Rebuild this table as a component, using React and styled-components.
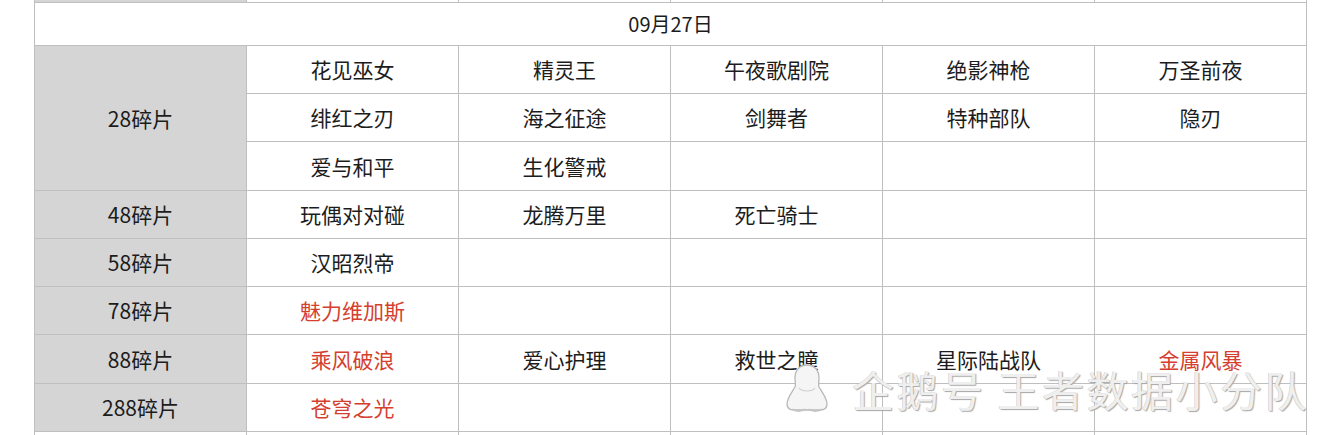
import React from "react";
import styled, { createGlobalStyle } from "styled-components";

const GlobalStyle = createGlobalStyle`
  html, body {
    margin: 0;
    padding: 0;
    background: #fff;
  }
  body {
    font-family: "Noto Sans CJK SC", "Noto Sans", sans-serif;
    color: #1c1c1c;
  }
`;

const Page = styled.div`
  position: relative;
  width: 1334px;
  height: 435px;
  overflow: hidden;
  padding-left: 34px;
  box-sizing: border-box;
`;

const Sheet = styled.div`
  display: grid;
  grid-template-columns: repeat(6, 211px);
  grid-template-rows: 2px 42px 47px 47px 48px 47px 47px 47px 48px 47px 3px;
  gap: 1px;
  padding: 0 1px;
  width: max-content;
  background: #bfbfbf;
`;

const Cell = styled.div`
  display: flex;
  align-items: center;
  justify-content: center;
  background: ${(p) => (p.$label ? "#d5d5d5" : "#fff")};
  color: ${(p) => (p.$hot ? "#d43f2f" : "#1c1c1c")};
  font-size: 21px;
  line-height: 1;
  white-space: nowrap;
  overflow: hidden;
  grid-column: ${(p) => (p.$span ? `span ${p.$span}` : "auto")};
  grid-row: ${(p) => (p.$rows ? `span ${p.$rows}` : "auto")};
`;

const DateCell = styled(Cell)`
  font-size: 20px;
`;

const Watermark = styled.div`
  position: absolute;
  left: 782px;
  top: 358px;
  display: flex;
  align-items: center;
  gap: 20px;
  pointer-events: none;
`;

const MarkText = styled.span`
  font-family: "Noto Sans CJK SC", sans-serif;
  font-size: 42px;
  letter-spacing: 2.5px;
  color: #efefef;
  text-shadow: 1px 1px 1px #a6a6a6, -0.5px -0.5px 0 rgba(170, 170, 170, 0.6);
  white-space: pre;
`;

const Penguin = () => (
  <svg width="50" height="54" viewBox="0 0 50 54">
    <path
      d="M25 3c-8 0-12 6-12 13 0 4 1 6 0 9-3 5-8 11-8 17 0 4 3 6 7 6h26c4 0 7-2 7-6 0-6-5-12-8-17-1-3 0-5 0-9 0-7-4-13-12-13z"
      fill="#f5f5f5"
      stroke="#b8b8b8"
      strokeWidth="1.3"
    />
    <path d="M17 26c3 4 13 4 16 0" fill="none" stroke="#cfcfcf" strokeWidth="1.2" />
    <path d="M10 47c3 3 10 3 13 0M27 47c3 3 10 3 13 0" fill="none" stroke="#c4c4c4" strokeWidth="1.3" />
  </svg>
);

const groups = [
  {
    label: "28碎片",
    rows: [
      ["花见巫女", "精灵王", "午夜歌剧院", "绝影神枪", "万圣前夜"],
      ["绯红之刃", "海之征途", "剑舞者", "特种部队", "隐刃"],
      ["爱与和平", "生化警戒", "", "", ""],
    ],
  },
  { label: "48碎片", rows: [["玩偶对对碰", "龙腾万里", "死亡骑士", "", ""]] },
  { label: "58碎片", rows: [["汉昭烈帝", "", "", "", ""]] },
  { label: "78碎片", rows: [["*魅力维加斯", "", "", "", ""]] },
  { label: "88碎片", rows: [["*乘风破浪", "爱心护理", "救世之瞳", "星际陆战队", "*金属风暴"]] },
  { label: "288碎片", rows: [["*苍穹之光", "", "", "", ""]] },
];

const edge = [0, 1, 2, 3, 4, 5];

export default function App() {
  return (
    <>
      <GlobalStyle />
      <Page>
        <Sheet>
          {edge.map((i) => (
            <Cell key={"top" + i} $label={i === 0} />
          ))}

          <DateCell $span={6}>09月27日</DateCell>

          {groups.map((g) => (
            <React.Fragment key={g.label}>
              <Cell $label $rows={g.rows.length}>
                {g.label}
              </Cell>
              {g.rows.map((row, ri) =>
                row.map((name, ci) => {
                  const hot = name.startsWith("*");
                  return (
                    <Cell key={`${g.label}-${ri}-${ci}`} $hot={hot}>
                      {hot ? name.slice(1) : name}
                    </Cell>
                  );
                })
              )}
            </React.Fragment>
          ))}

          {edge.map((i) => (
            <Cell key={"bottom" + i} />
          ))}
        </Sheet>

        <Watermark>
          <Penguin />
          <MarkText>企鹅号 王者数据小分队</MarkText>
        </Watermark>
      </Page>
    </>
  );
}
